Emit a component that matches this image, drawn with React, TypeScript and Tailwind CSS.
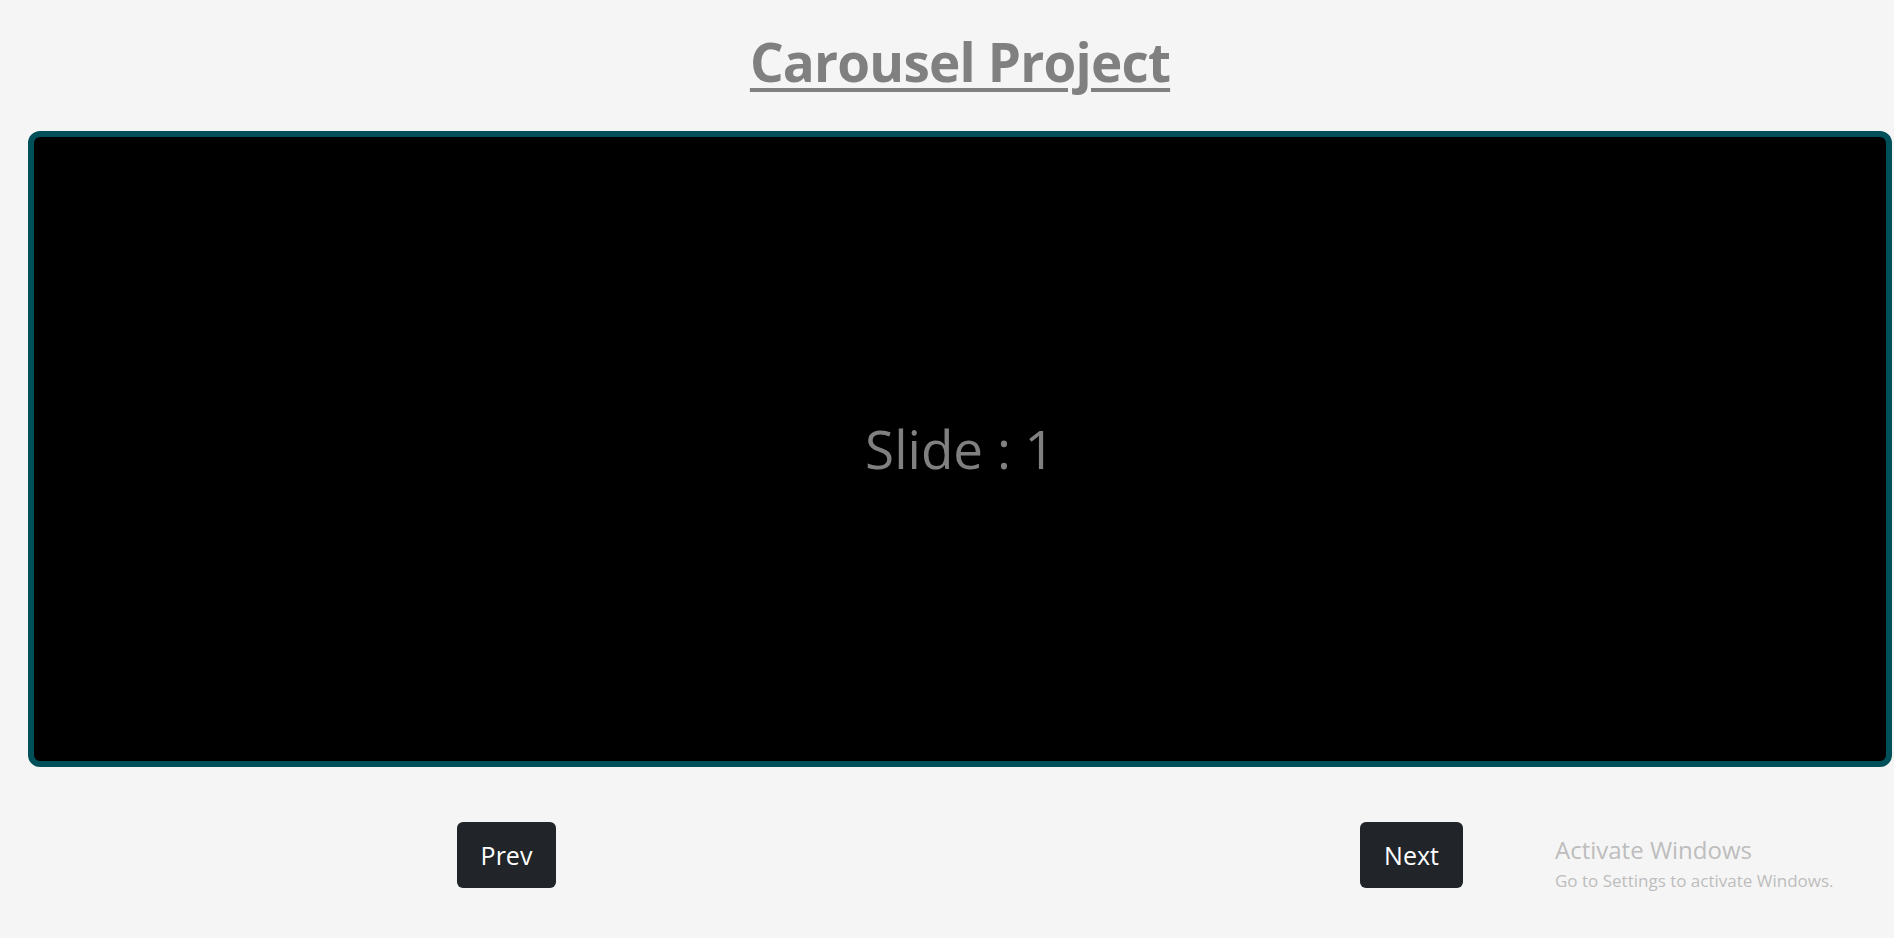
import { useState } from "react";

const slides = [1, 2, 3, 4, 5];

export default function App() {
  const [index, setIndex] = useState(0);

  const prev = () => setIndex((i) => (i - 1 + slides.length) % slides.length);
  const next = () => setIndex((i) => (i + 1) % slides.length);

  return (
    <div className="relative h-screen w-full overflow-hidden bg-[#f5f5f5] font-['Open_Sans',sans-serif]">
      <div className="w-[1920px]">
        {/* Title */}
        <h1 className="pt-[35px] text-center text-[53px] font-bold leading-none tracking-[-0.8px] text-[#808080] underline decoration-[4px] underline-offset-[6px]">
          Carousel Project
        </h1>

        {/* Slide */}
        <div className="mx-[28px] mt-[43px] flex h-[636px] items-center justify-center rounded-[12px] border-[6px] border-[#00505a] bg-black">
          <span className="text-[53px] text-[#808080]">Slide : {slides[index]}</span>
        </div>

        {/* Controls */}
        <div className="ml-[457px] mt-[55px] flex gap-[804px]">
          <button
            onClick={prev}
            className="h-[66px] w-[99px] rounded-[6px] bg-[#212529] pt-[2px] text-[25px] text-white"
          >
            Prev
          </button>
          <button
            onClick={next}
            className="h-[66px] w-[103px] rounded-[6px] bg-[#212529] pt-[2px] text-[25px] text-white"
          >
            Next
          </button>
        </div>
      </div>

      {/* Windows watermark */}
      <div className="pointer-events-none absolute left-[1555px] top-[834px] text-[#bdbdbd]">
        <div className="text-[24px] leading-[32px]">Activate Windows</div>
        <div className="mt-[1px] text-[17px] leading-[28px]">Go to Settings to activate Windows.</div>
      </div>
    </div>
  );
}
